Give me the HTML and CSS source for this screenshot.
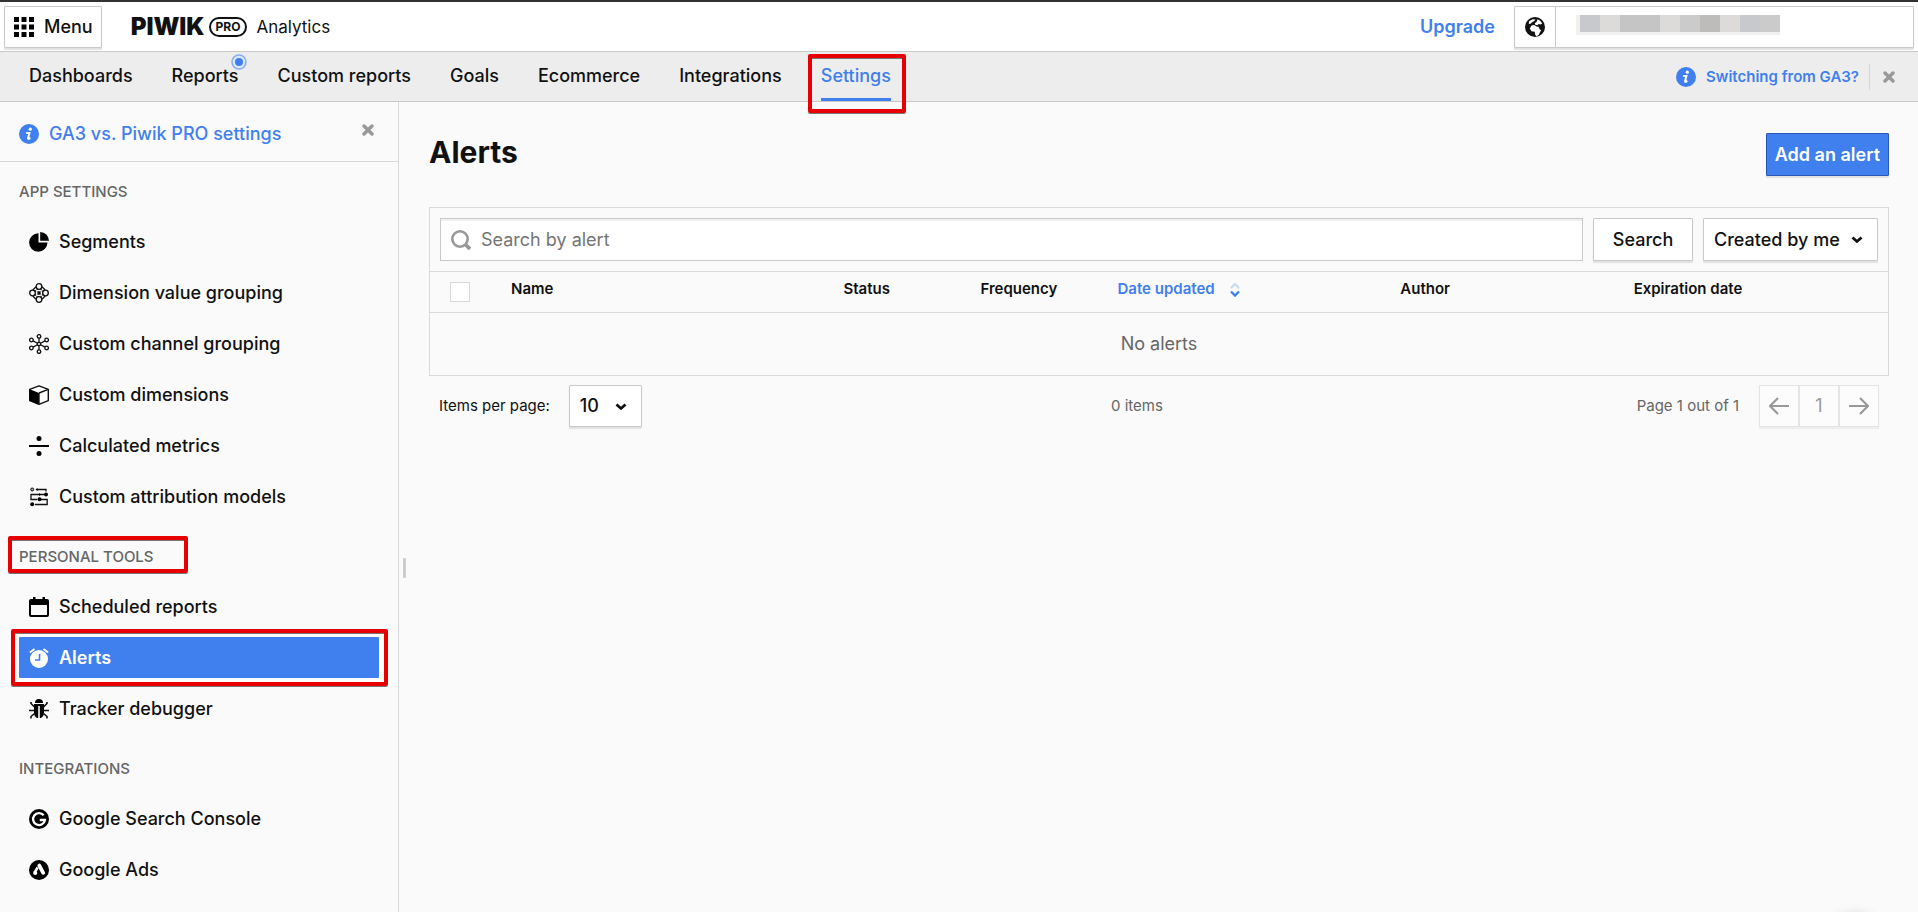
FILE: index.html
```
<!DOCTYPE html>
<html lang="en">
<head>
<meta charset="utf-8">
<meta name="viewport" content="width=device-width, initial-scale=1">
<title>Alerts - Piwik PRO Analytics</title>
<link rel="stylesheet" href="styles.css">
</head>
<body>
<svg class="sprite" aria-hidden="true">
  <symbol id="i-info" viewBox="0 0 20 20"><circle cx="10" cy="10" r="10" fill="#3f7fee"/><circle cx="11.3" cy="5.2" r="1.6" fill="#fff"/><path d="M7.2 8.9h3.2l-1.3 5.2c-.2.9.4 1 1.100.5l1.200-.7" fill="none" stroke="#fff" stroke-width="2"/></symbol>
  <symbol id="i-close" viewBox="0 0 12 12"><path d="M2 2l8 8M10 2l-8 8" stroke="#999" stroke-width="3.400" stroke-linecap="round"/></symbol>
  <symbol id="i-chevron" viewBox="0 0 12 8"><path d="M1.500 1.500L6 5.500l4.500-4" fill="none" stroke="#111" stroke-width="2.800"/></symbol>
</svg>

<header class="topbar">
  <button class="menu-btn" type="button">
    <svg class="icon" viewBox="0 0 20 20" aria-hidden="true"><path d="M0 0h5v5H0zM7.500 0h5v5h-5zM15 0h5v5h-5zM0 7.500h5v5H0zM7.500 7.500h5v5h-5zM15 7.500h5v5h-5zM0 15h5v5H0zM7.500 15h5v5h-5zM15 15h5v5h-5z"/></svg>
    Menu
  </button>
  <a class="brand" href="#"><span class="brand-name">PIWIK</span><span class="brand-pro">PRO</span></a>
  <span class="module">Analytics</span>
  <a class="upgrade" href="#">Upgrade</a>
  <div class="account">
    <button class="globe" type="button" aria-label="Language">
      <svg class="icon" viewBox="0 0 20 20" aria-hidden="true"><circle cx="10" cy="10" r="10" fill="#111"/><path d="M4 4.300L7.500 2.200l3 .2-1.500 1.800-2 1-1.500 1.500-1.700.4z" fill="#fff"/><path d="M12.500 2.200l2.700 1.500 2 2.900-1.700 1-1.800-.6-1.500 1.200-1.900-.4-.6-1.500 2-1.500z" fill="#fff"/><path d="M6.500 8.600l3-.6 1.800 1.400 2.200.3 1.500 3 1.300.3-1.300 2.200-1.300 2.800-2.300 1.200-1.200-1.400-.5-3-3.200-.6-1.700-2.700z" fill="#fff"/></svg>
    </button>
    <button class="user" type="button" aria-label="Account">
      <span class="mask"><i class="m1"></i><i class="m2"></i><i class="m3"></i><i class="m3"></i><i class="m2"></i><i class="m4"></i><i class="m5"></i><i class="m2"></i><i class="m1"></i><i class="m4"></i></span>
    </button>
  </div>
</header>

<nav class="nav">
  <a href="#">Dashboards</a>
  <a href="#">Reports<svg class="pulse" viewBox="0 0 16 16" aria-hidden="true"><circle cx="8" cy="8" r="7" fill="#dfe8f8" stroke="#86aeee" stroke-width="1.500"/><circle cx="8" cy="8" r="4" fill="#3f7fee"/></svg></a>
  <a href="#">Custom reports</a>
  <a href="#">Goals</a>
  <a href="#">Ecommerce</a>
  <a href="#">Integrations</a>
  <a class="current marked" href="#">Settings</a>
  <div class="switching">
    <a href="#"><svg class="icon" aria-hidden="true"><use href="#i-info"/></svg>Switching from GA3?</a>
    <button class="close" type="button" aria-label="Dismiss"><svg aria-hidden="true"><use href="#i-close"/></svg></button>
  </div>
</nav>

<div class="layout">
  <aside class="sidebar">
    <div class="banner">
      <a href="#"><svg class="icon" aria-hidden="true"><use href="#i-info"/></svg>GA3 vs. Piwik PRO settings</a>
      <button class="close" type="button" aria-label="Dismiss"><svg aria-hidden="true"><use href="#i-close"/></svg></button>
    </div>
    <section class="group">
      <h2>APP SETTINGS</h2>
      <ul>
        <li><a href="#"><svg class="icon" viewBox="0 0 20 20" aria-hidden="true"><path d="M9.500 1.300v9.200h9A9.200 9.200 0 1 1 9.500 1.300z"/><path d="M11.200 0A9 9 0 0 1 20 8.700h-8.800z"/></svg>Segments</a></li>
        <li><a href="#"><svg class="icon line" viewBox="0 0 20 20" aria-hidden="true"><circle cx="10" cy="3.500" r="2.800"/><circle cx="3.500" cy="10" r="2.800"/><circle cx="16.500" cy="10" r="2.800"/><circle cx="10" cy="16.500" r="2.800"/><path d="M3.800 7L7 3.800M13 3.800L16.200 7M3.800 13L7 16.200M13 16.200l3.200-3.200"/><path d="M9 9h2v2H9z" class="solid"/><path d="M6 8.500L8.500 6M11.500 6L14 8.500M6 11.500L8.500 14M11.500 14l2.500-2.500" stroke-dasharray="1.400 1"/></svg>Dimension value grouping</a></li>
        <li><a href="#"><svg class="icon line" viewBox="0 0 20 20" aria-hidden="true"><circle cx="10" cy="10" r="1.700"/><circle cx="10" cy="2.400" r="1.800"/><circle cx="10" cy="17.600" r="1.800"/><circle cx="2.400" cy="6" r="1.800"/><circle cx="17.600" cy="6" r="1.800"/><circle cx="2.400" cy="14" r="1.800"/><circle cx="17.600" cy="14" r="1.800"/><path d="M10 4.200v4M10 11.800v4M4.100 6.900l4.300 2.300M15.900 6.900l-4.300 2.300M4.100 13.100l4.300-2.300M15.900 13.100l-4.300-2.300"/></svg>Custom channel grouping</a></li>
        <li><a href="#"><svg class="icon" viewBox="0 0 20 20" aria-hidden="true"><path d="M10 .8l9.300 3.500v11.300L10 19.300.7 15.600V4.300z" fill="#fff" stroke="#111" stroke-width="1.400" stroke-linejoin="round"/><path d="M.7 4.300L10 8v11.300L.7 15.600z"/><path d="M10 8l9.300-3.700" fill="none" stroke="#111" stroke-width="1.400"/><path d="M10 8v11" stroke="#111" stroke-width="1.400"/></svg>Custom dimensions</a></li>
        <li><a href="#"><svg class="icon" viewBox="0 0 20 20" aria-hidden="true"><path d="M0 9h20v2H0z"/><circle cx="10" cy="2.500" r="2.500"/><circle cx="10" cy="17.500" r="2.500"/></svg>Calculated metrics</a></li>
        <li><a href="#"><svg class="icon" viewBox="0 0 20 20" aria-hidden="true"><path d="M7.500 2.500H17v2M15 7.500H2v5h6M12 12.500h6.200v5H6" fill="none" stroke="#111" stroke-width="1.300"/><circle cx="3.200" cy="2.500" r="1.500" fill="#999" stroke="#111"/><circle cx="17" cy="7.500" r="2"/><circle cx="10.500" cy="12.300" r="2"/><circle cx="3.200" cy="17.300" r="2"/><path d="M6.500 2.500l2-1.500v3zM12 7.500l-2-1.500v3z"/></svg>Custom attribution models</a></li>
      </ul>
    </section>
    <section class="group">
      <h2 class="marked">PERSONAL TOOLS</h2>
      <ul>
        <li><a href="#"><svg class="icon" viewBox="0 0 20 20" aria-hidden="true"><path fill-rule="evenodd" d="M2 2h2V0h2.500v2h7V0H16v2h2a2 2 0 0 1 2 2v14a2 2 0 0 1-2 2H2a2 2 0 0 1-2-2V4a2 2 0 0 1 2-2zM2 8v10h16V8z"/></svg>Scheduled reports</a></li>
        <li><a class="selected marked" href="#"><svg class="icon" viewBox="0 0 20 20" aria-hidden="true"><circle cx="10" cy="11" r="9"/><path d="M.8 4.500L5.500 1M19.200 4.500L14.500 1" stroke="#fff" stroke-width="1.800"/><path d="M10.500 6v6H6" fill="none" stroke="#3f7fee" stroke-width="1.600"/></svg>Alerts</a></li>
        <li><a href="#"><svg class="icon" viewBox="0 0 20 20" aria-hidden="true"><path d="M6 4a4 4 0 0 1 8 0zM5 5h10v8.500C15 17 13 19 10.800 19V7H9.200v12C7 19 5 17 5 13.500z"/><path d="M5.500 8L2 4.500V3M14.500 8L18 4.500V3M5 11.500H0M15 11.500h5M5.500 14.500L2 17.500V19.500M14.500 14.500l3.500 3v2" fill="none" stroke="#111" stroke-width="1.600"/></svg>Tracker debugger</a></li>
      </ul>
    </section>
    <section class="group">
      <h2>INTEGRATIONS</h2>
      <ul>
        <li><a href="#"><svg class="icon" viewBox="0 0 20 20" aria-hidden="true"><circle cx="10" cy="10" r="10"/><path d="M14.700 6.200A6 6 0 1 0 16 11h-5.300" fill="none" stroke="#fff" stroke-width="2.300"/></svg>Google Search Console</a></li>
        <li><a href="#"><svg class="icon" viewBox="0 0 20 20" aria-hidden="true"><circle cx="10" cy="10" r="10"/><path d="M10.300 5.600l3.900 7.200" stroke="#fff" stroke-width="3.800" stroke-linecap="round"/><path d="M8.600 7.500l-3 5.200" stroke="#fff" stroke-width="2.600"/><circle cx="6.200" cy="13" r="2.100" fill="#fff"/></svg>Google Ads</a></li>
      </ul>
    </section>
  </aside>
  <div class="resizer"></div>

  <main class="content">
    <div class="title-row">
      <h1>Alerts</h1>
      <button class="primary" type="button">Add an alert</button>
    </div>
    <div class="panel">
      <form class="filters">
        <label class="search">
          <svg class="icon" viewBox="0 0 20 20" aria-hidden="true"><circle cx="9" cy="9" r="7.700" fill="none" stroke="#999" stroke-width="2.600"/><path d="M14.500 14.500l4.500 4.500" stroke="#999" stroke-width="3.800"/></svg>
          <input type="text" placeholder="Search by alert" aria-label="Search by alert">
        </label>
        <button class="plain" type="button">Search</button>
        <span class="select owner"><select aria-label="Owner"><option>Created by me</option></select><svg aria-hidden="true"><use href="#i-chevron"/></svg></span>
      </form>
      <table>
        <colgroup><col class="c-check"><col class="c-name"><col class="c-short"><col class="c-short"><col class="c-date"><col class="c-author"><col></colgroup>
        <thead>
          <tr><th><input type="checkbox" aria-label="Select all"></th><th>Name</th><th>Status</th><th>Frequency</th><th class="sorted">Date updated<svg class="sort" viewBox="0 0 10 14" aria-hidden="true"><path d="M1 5l4-4 4 4" fill="none" stroke="#c5d8fa" stroke-width="2"/><path d="M1 8.500l4 4 4-4" fill="none" stroke="#3f7fee" stroke-width="2.400"/></svg></th><th>Author</th><th>Expiration date</th></tr>
        </thead>
        <tbody><tr><td colspan="7">No alerts</td></tr></tbody>
      </table>
    </div>
    <div class="footer">
      <div class="per-page"><label for="pp">Items per page:</label><span class="select"><select id="pp"><option>10</option></select><svg aria-hidden="true"><use href="#i-chevron"/></svg></span></div>
      <span class="count">0 items</span>
      <div class="paging">
        <span>Page 1 out of 1</span>
        <div class="pager">
          <button type="button" disabled aria-label="Previous page"><svg class="icon" viewBox="0 0 20 20" aria-hidden="true"><path d="M20 10H2M9 2l-8 8 8 8"/></svg></button>
          <button type="button" disabled>1</button>
          <button type="button" disabled aria-label="Next page"><svg class="icon" viewBox="0 0 20 20" aria-hidden="true"><path d="M0 10h18M11 2l8 8-8 8"/></svg></button>
        </div>
      </div>
    </div>
  </main>
</div>
<div class="launcher"></div>
</body>
</html>
```
FILE: styles.css
```
* { box-sizing: border-box; }

body {
  margin: 0;
  min-height: 100vh;
  display: flex;
  flex-direction: column;
  overflow: hidden;
  background: #fafafa;
  color: #111;
  font: 400 18px/24px Inter, "Liberation Sans", sans-serif;
}

a { color: inherit; text-decoration: none; }
button, input, select { font: inherit; color: inherit; margin: 0; }
button { padding: 0; border: 0; background: none; }
.sprite { display: none; }
.icon { width: 20px; height: 20px; flex: none; display: block; }
.line { fill: none; stroke: #111; stroke-width: 1.3px; }
.line .solid { fill: #111; }

/* Highlight frames */
.marked { position: relative; }
.marked::before {
  content: "";
  position: absolute;
  border: 4px solid #e60000;
  border-radius: 2px;
  box-shadow: 0 1px 0 #777, inset 0 1px 0 #777;
}

/* Top bar */
.topbar {
  height: 52px;
  display: flex;
  align-items: center;
  padding: 1px 4px 0;
  background: #fff;
  border-top: 2px solid #333;
  border-bottom: 1px solid #c9c9c9;
}
.menu-btn, .account, .plain, .select select {
  background: #fff;
  border: 1px solid #c9c9c9;
  border-radius: 1px;
  box-shadow: 0 2px 1px #e2e2e2;
}
.menu-btn {
  height: 42px;
  display: flex;
  align-items: center;
  gap: 10px;
  padding: 0 8px 0 9px;
  font-weight: 500;
}
.brand { display: flex; align-items: center; gap: 4px; margin-left: 29px; }
.brand-name { font-weight: 900; font-size: 24px; }
.brand-pro {
  height: 20px;
  padding: 0 5px;
  border: 2px solid #111;
  border-radius: 10px;
  font-size: 12px;
  line-height: 16px;
  font-weight: 700;
}
.module { margin-left: 9px; font-size: 17px; }
.upgrade { margin-left: auto; margin-right: 19px; color: #3f7fee; font-weight: 600; }
.account { height: 42px; width: 400px; display: flex; }
.globe { width: 41px; display: grid; place-items: center; border-right: 1px solid #c9c9c9; }
.user { flex: 1; display: flex; align-items: flex-start; padding: 8px 20px; }
.mask { display: flex; border-left: 4px solid #f1f1f0; border-bottom: 3px solid #f1f1f0; }
.mask i { width: 20px; height: 17px; }
.m1 { background: #c8c9cc; }
.m2 { background: #dcdbda; }
.m3 { background: #c5c5c6; }
.m4 { background: #cccbcb; }
.m5 { background: #bdbcbb; }

/* Main navigation */
.nav {
  height: 50px;
  display: flex;
  align-items: stretch;
  gap: 39px;
  padding: 0 23px 0 29px;
  background: #ededed;
  border-bottom: 1px solid #c9c9c9;
  font-weight: 500;
}
.nav > a { position: relative; padding-top: 12px; border-bottom: 3px solid transparent; }
.nav > .current { color: #3f7fee; border-bottom-color: #3f7fee; }
.current.marked::before { inset: 2px -15px -15px -13px; }
.pulse { position: absolute; width: 16px; height: 16px; top: 2px; right: -8px; }
.switching { margin-left: auto; display: flex; align-items: center; color: #3f7fee; font-size: 15px; font-weight: 600; }
.switching a { display: flex; align-items: center; gap: 10px; padding-right: 10px; }
.switching .close { height: 26px; padding-left: 13px; border-left: 1px solid #d6d6d6; }
.close svg { width: 12px; height: 12px; display: block; }

/* Sidebar */
.layout { flex: 1; display: flex; }
.sidebar { width: 399px; flex: none; border-right: 1px solid #d9d9d9; }
.banner {
  height: 60px;
  display: flex;
  align-items: center;
  justify-content: space-between;
  padding: 4px 24px 0 19px;
  border-bottom: 1px solid #d9d9d9;
  color: #3f7fee;
  font-weight: 500;
}
.banner a { display: flex; align-items: center; gap: 10px; }
.banner .close { align-self: flex-start; padding-top: 18px; }
.group { padding: 20px 19px 10px; }
.group h2 { margin: 0 0 19px; font-size: 15px; line-height: 20px; font-weight: 500; color: #666; }
.group + .group { padding-top: 20px; }
.group ul { margin: 0; padding: 0; list-style: none; display: grid; gap: 10px; }
.group li a { height: 41px; display: flex; align-items: center; gap: 10px; padding: 0 10px; font-weight: 500; }
.group .selected { background: #3f7fee; color: #fff; fill: #fff; font-weight: 600; border-radius: 1px; }
h2.marked::before { inset: -11px 191px -6px -11px; }
.selected.marked::before { inset: -8px -9px -8px -8px; box-shadow: 0 1px 0 #777, inset 0 1px 0 #777, inset 0 0 0 4px #fff; }
.resizer { align-self: center; width: 3px; height: 20px; margin: 122px 0 0 4px; background: #ccc; border-radius: 1px; }

/* Content */
.content { flex: 1; padding: 31px 29px 0 23px; }
.title-row { display: flex; justify-content: space-between; margin-bottom: 31px; }
h1 { margin: 0; font-size: 30px; line-height: 38px; font-weight: 700; }
.primary {
  height: 43px;
  padding: 0 8px;
  background: #3f7fee;
  border: 1px solid #2a56b5;
  border-radius: 1px;
  box-shadow: 0 2px 1px #e2e2e2;
  color: #fff;
  font-weight: 600;
}
.panel { border: 1px solid #d9d9d9; }
.filters { display: flex; gap: 10px; padding: 10px; }
.search {
  flex: 1;
  height: 43px;
  display: flex;
  align-items: center;
  gap: 10px;
  padding: 0 10px;
  background: #fff;
  border: 1px solid #c9c9c9;
  box-shadow: inset 0 2px 1px #f0f0f0;
}
.search input { flex: 1; padding: 0; border: 0; background: none; }
.search input::placeholder { color: #757575; opacity: 1; }
.plain { height: 43px; width: 100px; font-weight: 500; }
.select { position: relative; display: block; }
.select select { appearance: none; height: 42px; padding: 0 48px 0 10px; font-weight: 500; }
.owner, .owner select { width: 175px; }
.owner select { height: 43px; padding-right: 30px; }
.select svg { position: absolute; width: 12px; height: 8px; right: 15px; top: 18px; pointer-events: none; }

table { width: 100%; table-layout: fixed; border-collapse: separate; border-spacing: 0; }
.c-check { width: 71px; }
.c-name { width: 22.8%; }
.c-short { width: 9.4%; }
.c-date { width: 19.4%; }
.c-author { width: 16%; }
th {
  height: 42px;
  padding: 7px 10px 0;
  vertical-align: top;
  text-align: left;
  font-size: 15px;
  line-height: 20px;
  font-weight: 600;
  border-top: 1px solid #d9d9d9;
  border-bottom: 1px solid #d9d9d9;
}
th:first-child { padding: 10px 20px 0; }
th input { appearance: none; display: block; width: 20px; height: 20px; background: #fff; border: 1px solid #d9d9d9; }
.sorted { color: #3f7fee; }
.sort { width: 10px; height: 14px; margin-left: 15px; vertical-align: -3px; }
td { height: 62px; padding: 0; text-align: center; color: #666; }

.footer {
  display: grid;
  grid-template-columns: 7fr 1fr 7fr;
  align-items: center;
  padding: 9px 10px 0;
  font-size: 15px;
  color: #666;
}
.per-page { display: flex; align-items: center; gap: 19px; color: #111; }
.per-page select { width: 73px; padding-right: 20px; font-size: 18px; }
.paging { display: flex; align-items: center; justify-content: flex-end; gap: 20px; }
.pager { display: flex; box-shadow: 0 2px 1px #eee; }
.pager button {
  width: 40px;
  height: 42px;
  display: grid;
  place-items: center;
  background: #fcfcfc;
  border: 1px solid #e4e4e4;
  color: #999;
  font-size: 18px;
}
.pager path { fill: none; stroke: #999; stroke-width: 2.200px; }

.launcher {
  position: fixed;
  right: 33px;
  bottom: -64px;
  width: 60px;
  height: 60px;
  border-radius: 30px;
  box-shadow: 0 0 14px rgba(0, 0, 0, 0.2);
}
```
